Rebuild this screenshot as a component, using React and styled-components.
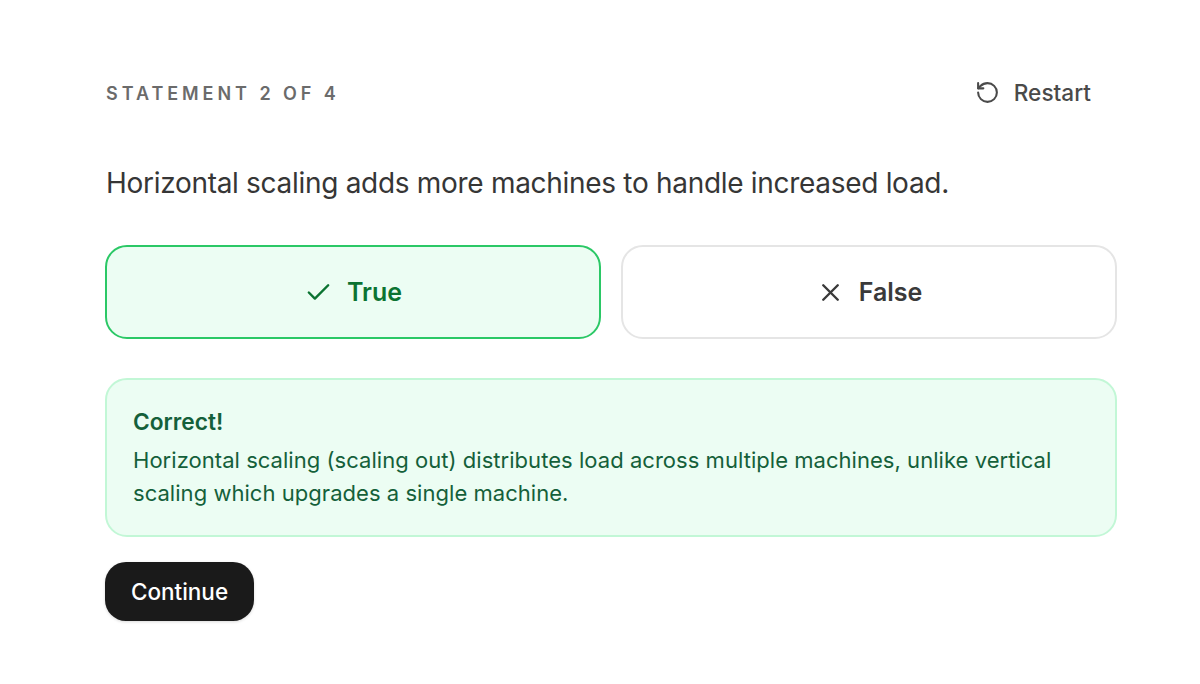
import React from 'react';
import styled, { createGlobalStyle } from 'styled-components';
import { Check, RotateCcw, X } from 'lucide-react';

const GlobalStyle = createGlobalStyle`
	html, body {
		margin: 0;
		padding: 0;
		background: #ffffff;
	}
	body {
		font-family: Inter, "Liberation Sans", sans-serif;
	}
`;

const Page = styled.div`
	box-sizing: border-box;
	width: 1200px;
	height: 684px;
	padding: 74px 83px 0 105px;
	overflow: hidden;
`;

const Header = styled.div`
	display: flex;
	align-items: center;
	justify-content: space-between;
	height: 38px;
`;

const Counter = styled.div`
	padding-left: 1px;
	font-size: 18px;
	font-weight: 600;
	letter-spacing: 3.95px;
	color: #6b6b6b;
`;

const RestartButton = styled.button`
	display: flex;
	align-items: center;
	gap: 14px;
	border: 0;
	background: none;
	padding: 0 26px 2px 0;
	font: 500 22.6px Inter, sans-serif;
	color: #4a4a4a;
`;

const Statement = styled.p`
	margin: 51px 0 0;
	padding-left: 1px;
	font-size: 28px;
	line-height: 40px;
	color: #363636;
	letter-spacing: -0.3px;
`;

const Options = styled.div`
	display: grid;
	grid-template-columns: 1fr 1fr;
	gap: 20px;
	margin-top: 42px;
`;

const Option = styled.button`
	box-sizing: border-box;
	display: flex;
	align-items: center;
	justify-content: center;
	gap: 14px;
	height: 94px;
	border-radius: 22px;
	border: 2px solid ${(props) => (props.$correct ? '#2bc866' : '#e5e5e5')};
	background: ${(props) => (props.$correct ? '#ecfdf3' : '#ffffff')};
	color: ${(props) => (props.$correct ? '#0b7331' : '#3a3a3a')};
	font: 600 25px Inter, sans-serif;
`;

const OptionIcon = styled.span`
	display: flex;
	width: 29px;
	justify-content: center;
`;

const Feedback = styled.div`
	box-sizing: border-box;
	height: 159px;
	margin-top: 39px;
	padding: 26px 26px 0;
	border: 2px solid #c2f7d6;
	border-radius: 22px;
	background: #ecfdf3;
	color: #14603a;
`;

const FeedbackTitle = styled.div`
	font-size: 22.7px;
	font-weight: 600;
	line-height: 32px;
`;

const FeedbackText = styled.div`
	margin-top: 6px;
	font-size: 22px;
	line-height: 33px;
	letter-spacing: 0.04px;
`;

const ContinueButton = styled.button`
	display: block;
	margin-top: 25px;
	width: 149px;
	height: 59px;
	border: 0;
	border-radius: 21px;
	background: #1a1a1a;
	box-shadow: 0 1px 3px rgba(0, 0, 0, 0.15);
	color: #ffffff;
	font: 500 22.5px Inter, sans-serif;
`;

export default function App() {
	return (
		<Page>
			<GlobalStyle />
			<Header>
				<Counter>STATEMENT 2 OF 4</Counter>
				<RestartButton>
					<RotateCcw size={25} strokeWidth={2} />
					Restart
				</RestartButton>
			</Header>
			<Statement>Horizontal scaling adds more machines to handle increased load.</Statement>
			<Options>
				<Option $correct>
					<OptionIcon>
						<Check size={29} strokeWidth={2} />
					</OptionIcon>
					True
				</Option>
				<Option>
					<OptionIcon>
						<X size={29} strokeWidth={2} />
					</OptionIcon>
					False
				</Option>
			</Options>
			<Feedback>
				<FeedbackTitle>Correct!</FeedbackTitle>
				<FeedbackText>
					Horizontal scaling (scaling out) distributes load across multiple machines, unlike vertical scaling which upgrades a single machine.
				</FeedbackText>
			</Feedback>
			<ContinueButton>Continue</ContinueButton>
		</Page>
	);
}
